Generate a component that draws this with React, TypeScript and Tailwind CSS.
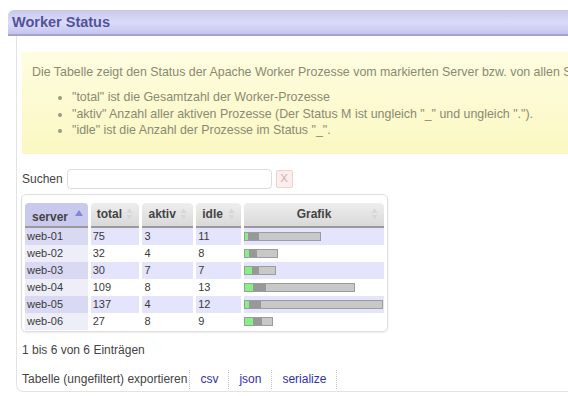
import React from 'react'

const rows = [
  { server: 'web-01', total: 75, aktiv: 3, idle: 11 },
  { server: 'web-02', total: 32, aktiv: 4, idle: 8 },
  { server: 'web-03', total: 30, aktiv: 7, idle: 7 },
  { server: 'web-04', total: 109, aktiv: 8, idle: 13 },
  { server: 'web-05', total: 137, aktiv: 4, idle: 12 },
  { server: 'web-06', total: 27, aktiv: 8, idle: 9 },
]

function SortBoth() {
  return (
    <svg width="7" height="12" viewBox="0 0 7 12" className="shrink-0">
      <path d="M3.5 0.5 L6.5 5 L0.5 5 Z" fill="#d6d6d6" />
      <path d="M3.5 11.5 L6.5 7 L0.5 7 Z" fill="#d6d6d6" />
    </svg>
  )
}

function SortAsc() {
  return (
    <svg width="8" height="6" viewBox="0 0 8 6" className="shrink-0">
      <path d="M4 0 L8 6 L0 6 Z" fill="#7f86dc" />
    </svg>
  )
}

function Bar({ total, aktiv, idle }: { total: number; aktiv: number; idle: number }) {
  return (
    <div className="flex h-[9px] border border-[#9c9c9c] bg-[#c8c8c8]" style={{ width: total + 2 }}>
      <div className="h-full bg-[#86f086]" style={{ width: aktiv }} />
      <div className="h-full bg-[#989898]" style={{ width: idle }} />
    </div>
  )
}

export default function App() {
  const th = 'h-[23px] p-0 rounded-t-[4px] border-b-2 border-[#9a9a9a] bg-gradient-to-b from-[#eeeeee] to-[#d9d9d9] text-[12px] font-bold text-[#444] align-middle'

  return (
    <div className="w-[568px] h-[396px] overflow-hidden bg-white font-['Liberation_Sans',Arial,sans-serif]">
      <div className="w-[660px] pt-[10px] pl-[8px]">
        {/* Kopfzeile */}
        <div className="h-[26px] flex items-center pl-[4px] rounded-tl-[6px] border-t border-[#c9c9dc] border-b-2 border-b-[#a3a3cb] bg-gradient-to-b from-[#cbcbf0] via-[#dadafb] to-[#c6c6ee]">
          <span className="text-[14.5px] font-bold text-[#52529a] leading-none">Worker Status</span>
        </div>

        <div className="ml-[8px] border-l border-b border-[#e3e3e3] rounded-bl-[7px] pl-[5px] pt-[16px]">
          {/* Hinweis */}
          <div className="bg-gradient-to-b from-[#fefde0] to-[#fbf7c2] pt-[12px] pb-[15px] pl-[10px] text-[12.4px] leading-[16px] text-[#8a8a72] whitespace-nowrap">
            <p>Die Tabelle zeigt den Status der Apache Worker Prozesse vom markierten Server bzw. von allen Servern an.</p>
            <ul className="mt-[9px] pl-[40px] list-disc leading-[16.5px] marker:text-[#9a9a80]">
              <li>"total" ist die Gesamtzahl der Worker-Prozesse</li>
              <li>"aktiv" Anzahl aller aktiven Prozesse (Der Status M ist ungleich "_" und ungleich ".").</li>
              <li>"idle" ist die Anzahl der Prozesse im Status "_".</li>
            </ul>
          </div>

          {/* Suche */}
          <div className="mt-[15px] flex items-center text-[12px] text-[#444]">
            <span>Suchen</span>
            <input className="ml-[4px] w-[205px] h-[20px] rounded-[4px] border border-[#dcdcdc] outline-none" />
            <span className="ml-[4px] w-[17px] h-[18px] flex items-center justify-center rounded-[2px] border border-[#f1d0d0] bg-[#fdeeee] text-[11px] text-[#d8a8a8]">X</span>
          </div>

          {/* Tabelle */}
          <div className="mt-[5px] w-[367px] rounded-[5px] border border-[#dedede] shadow-[0_1px_2px_rgba(0,0,0,0.08)] pt-[8px] pb-[1px] -ml-[1px]">
            <table className="border-separate border-spacing-x-[3px] border-spacing-y-0 text-[11px] text-[#3a3a3a]">
              <thead>
                <tr>
                  <th className={th + ' w-[63px] !bg-none !bg-[#c9c9ee]'}>
                    <div className="flex items-start justify-between pl-[7px] pr-[5px] pt-[3px]">
                      <span className="pt-[2px]">server</span>
                      <span className="pt-[4px]"><SortAsc /></span>
                    </div>
                  </th>
                  <th className={th + ' w-[49px]'}>
                    <div className="flex items-center justify-between pl-[6px] pr-[6px]">
                      <span>total</span>
                      <SortBoth />
                    </div>
                  </th>
                  <th className={th + ' w-[51px]'}>
                    <div className="flex items-center justify-between pl-[6px] pr-[6px]">
                      <span>aktiv</span>
                      <SortBoth />
                    </div>
                  </th>
                  <th className={th + ' w-[45px]'}>
                    <div className="flex items-center justify-between pl-[6px] pr-[6px]">
                      <span>idle</span>
                      <SortBoth />
                    </div>
                  </th>
                  <th className={th + ' w-[140px]'}>
                    <div className="relative flex items-center justify-center">
                      <span>Grafik</span>
                      <span className="absolute right-[6px] top-1/2 -translate-y-1/2 flex"><SortBoth /></span>
                    </div>
                  </th>
                </tr>
              </thead>
              <tbody>
                {rows.map((r, i) => {
                  const odd = i % 2 === 0
                  const cell = 'h-[17px] p-0 pl-[2px] align-middle ' + (odd ? 'bg-[#e4e4fc]' : 'bg-white')
                  return (
                    <tr key={r.server}>
                      <td className={'h-[17px] p-0 pl-[2px] align-middle ' + (odd ? 'bg-[#d9d9f3]' : 'bg-[#eeeef9]')}>{r.server}</td>
                      <td className={cell}>{r.total}</td>
                      <td className={cell}>{r.aktiv}</td>
                      <td className={cell}>{r.idle}</td>
                      <td className={cell + ' !pl-0'}>
                        <Bar total={r.total} aktiv={r.aktiv} idle={r.idle} />
                      </td>
                    </tr>
                  )
                })}
              </tbody>
            </table>
          </div>

          {/* Fusszeile */}
          <div className="mt-[11px] text-[12px] leading-[14px] text-[#444]">1 bis 6 von 6 Einträgen</div>

          <div className="mt-[13px] pb-[2px] flex items-center text-[12px] text-[#444]">
            <span className="mr-[2px]">Tabelle (ungefiltert) exportieren</span>
            <div className="flex h-[19px] border-l border-dotted border-[#c4c4c4]">
              {['csv', 'json', 'serialize'].map(l => (
                <a key={l} className="px-[10px] flex items-center border-r border-dotted border-[#c4c4c4] text-[#2f2fae]">{l}</a>
              ))}
            </div>
          </div>
        </div>
      </div>
    </div>
  )
}
